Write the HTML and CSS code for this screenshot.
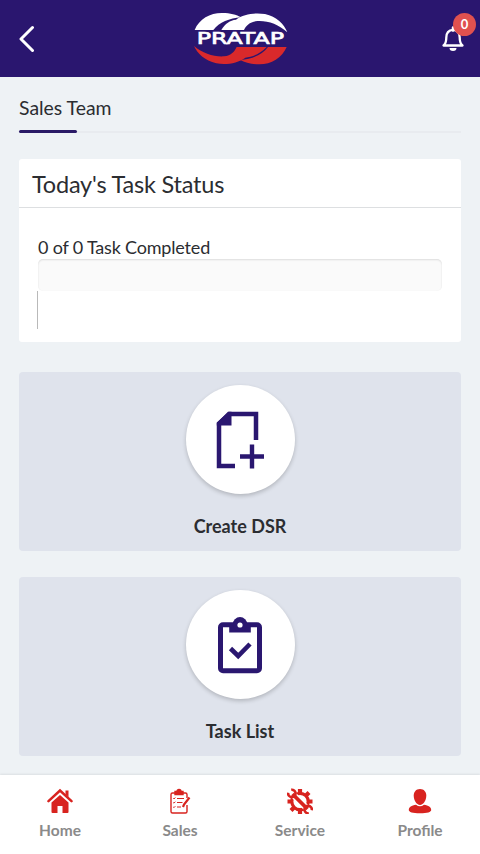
FILE: index.html
```html
<!DOCTYPE html>
<html lang="en">
<head>
  <meta charset="UTF-8">
  <title>Sales Team</title>
  <meta name="viewport" content="width=device-width, initial-scale=1">
  <link rel="stylesheet" href="styles.css">
</head>
<body>
  <div class="app">
    <header class="header">
      <a class="back-btn" href="#" aria-label="Back">
        <svg width="16" height="28" viewBox="0 0 16 28"><path d="M13.500 2.500 2 14l11.500 11.500" fill="none" stroke="#fff" stroke-width="3" stroke-linecap="round" stroke-linejoin="round"/></svg>
      </a>
      <svg class="logo" width="96" height="54" viewBox="36 36 288 162">
        <g fill="#fff">
          <path d="M44 90C58 56 92 38 128 39C150 39 170 44 183 52C148 55 118 67 100 90Z"/>
          <path d="M124 90C136 70 150 61 168 59C190 42 225 37 255 42C290 50 312 72 322 97C296 72 262 61 232 63C210 65 198 76 192 90Z"/>
        </g>
        <g fill="#d9292b" transform="rotate(180 182 116)">
          <path d="M44 91C58 58 92 38 128 39C150 39 170 44 183 52C148 55 118 67 100 91Z"/>
          <path d="M104 91C126 68 150 61 168 59C190 42 225 37 255 42C290 50 312 72 322 94C296 72 262 61 232 63C210 65 200 78 194 91Z"/>
        </g>
        <text x="50" y="133" textLength="262" lengthAdjust="spacingAndGlyphs" class="logo-text">PRATAP</text>
      </svg>
      <a class="bell" href="#" aria-label="Notifications">
        <svg width="24" height="26" viewBox="0 0 24 26"><path d="M2.500 19.500C5 17.500 5.300 15 5.300 11.500C5.300 7 7.500 4.200 12 3.800C16.500 4.200 18.700 7 18.700 11.500C18.700 15 19 17.500 21.500 19.500Z" fill="none" stroke="#fff" stroke-width="2.300" stroke-linejoin="round"/><path d="M12 1.500v3" stroke="#fff" stroke-width="2.500" stroke-linecap="round"/><path d="M8.500 22h7a3.500 3 0 0 1-7 0z" fill="#fff"/></svg>
        <span class="badge">0</span>
      </a>
    </header>

    <main class="content">
      <h1 class="page-title">Sales Team</h1>

      <section class="status-card">
        <h2 class="status-title">Today's Task Status</h2>
        <div class="status-body">
          <div class="status-label">0 of 0 Task Completed</div>
          <div class="progress"></div>
          <div class="progress-mark"></div>
        </div>
      </section>

      <a class="tile" href="#">
        <span class="tile-icon">
          <svg width="50" height="60" viewBox="0 0 50 60">
            <path d="M20 56H4V13.500L14.500 4H41V30" fill="none" stroke="#2a1770" stroke-width="4.500"/>
            <path d="M1.800 13 13 1.800h3.500v13.700H1.800z" fill="#2a1770"/>
            <path d="M25 46.500h24M37 34.500v24" stroke="#2a1770" stroke-width="4.400"/>
          </svg>
        </span>
        <span class="tile-label">Create DSR</span>
      </a>

      <a class="tile" href="#">
        <span class="tile-icon">
          <svg width="46" height="60" viewBox="0 0 46 60">
            <rect x="3.500" y="9.800" width="39" height="46" rx="2.500" fill="none" stroke="#2a1770" stroke-width="5"/>
            <path d="M12.200 8h21.600v9.500H12.200z" fill="#2a1770"/>
            <circle cx="23" cy="9.300" r="7.200" fill="#2a1770"/>
            <circle cx="23" cy="10" r="2.600" fill="#fff"/>
            <path d="M13.500 33.500l7.700 7.500L33 29" fill="none" stroke="#2a1770" stroke-width="4.600"/>
          </svg>
        </span>
        <span class="tile-label">Task List</span>
      </a>
    </main>

    <nav class="tabbar">
      <a class="tab" href="#">
        <svg width="26" height="26" viewBox="0 0 26 26" fill="#d8231f"><path d="M4.500 14.500 13 7l8.500 7.500V24q0 1-1 1h-5v-7h-5v7h-5q-1 0-1-1z"/><path d="M1.500 13.200 13 2.800l11.500 10.400" fill="none" stroke="#fff" stroke-width="4.500"/><path d="M1.500 13.200 13 2.500l11.500 10.700" fill="none" stroke="#d8231f" stroke-width="2.500" stroke-linecap="round"/><path d="M18.500 2.500h3V9l-3-2.700z"/></svg>
        <span>Home</span>
      </a>
      <a class="tab" href="#">
        <svg width="26" height="26" viewBox="0 0 26 26" fill="none" stroke="#d8231f" stroke-width="1.400">
          <path d="M8 5H5.500Q4 5 4 6.500v17Q4 25 5.500 25h13q1.500 0 1.500-1.500V17M20 10V6.500Q20 5 18.500 5H16"/>
          <path d="M8 3.500h2a2 2 0 0 1 4 0h2v3H8z" fill="#d8231f"/>
          <path d="M10 10.500h7M10 14.500h5.500M10 19h4" stroke-width="1.200"/>
          <path d="M6.300 10.300l.7.700 1.300-1.500M6.300 14.500l.7.700 1.300-1.500M6.300 19l.7.700 1.300-1.500" stroke-width="1"/>
          <path d="M22.500 9.500 17 16.500l-1 2.500" stroke-width="2.200"/>
        </svg>
        <span>Sales</span>
      </a>
      <a class="tab" href="#">
        <svg width="26" height="26" viewBox="0 0 26 26">
          <circle cx="13" cy="13.500" r="8.200" fill="none" stroke="#d8231f" stroke-width="3.200"/>
          <path d="M13 1v4.500M13 21.500V26M.5 13.500H5M21 13.500h4.500M19 7.500l3-3M7 19.500l-3 3" stroke="#d8231f" stroke-width="4.200"/>
          <path d="M6 6.500 20 20.500" stroke="#fff" stroke-width="6.500"/>
          <path d="M5.500 6 20.500 21" stroke="#d8231f" stroke-width="3.800"/>
          <path d="M4.200 1.800a3.700 3.700 0 1 1-3 3M21.800 25.200a3.700 3.700 0 1 1 3-3" fill="none" stroke="#d8231f" stroke-width="2.600"/>
        </svg>
        <span>Service</span>
      </a>
      <a class="tab" href="#">
        <svg width="26" height="26" viewBox="0 0 26 26" fill="#d8231f"><path d="M13 1c4 0 6.300 2.800 6.300 6.800C19.300 12 16.500 17 13 17S6.700 12 6.700 7.800C6.700 3.800 9 1 13 1z"/><path d="M9 16.800q4 3 8 0c4.500.7 7.200 2.500 7.200 5.200 0 2-3.700 3.300-11.200 3.300S1.800 24 1.800 22c0-2.700 2.700-4.500 7.200-5.200z"/></svg>
        <span>Profile</span>
      </a>
    </nav>
  </div>
</body>
</html>
```
FILE: styles.css
```css
* {
  box-sizing: border-box;
}
body {
  font-family: Lato, 'Liberation Sans', sans-serif;
  background: #eef2f5;
  margin: 0;
  color: #2b2d31;
}
a {
  color: inherit;
  text-decoration: none;
}
svg {
  display: block;
}
.app {
  display: flex;
  flex-direction: column;
  height: 854px;
  overflow: hidden;
}
.header {
  display: grid;
  flex-shrink: 0;
  grid-template-columns: 1fr auto 1fr;
  align-items: center;
  height: 77px;
  background: #2a166f;
  padding: 0 15px 0 19px;
}
.logo {
  margin-left: -4px;
}
.logo-text {
  font-family: 'DejaVu Sans', sans-serif;
  font-size: 48px;
  fill: #fff;
  stroke: #fff;
  stroke-width: 2px;
}
.bell {
  position: relative;
  justify-self: end;
}
.badge {
  position: absolute;
  top: -13px;
  right: -11px;
  width: 23px;
  height: 23px;
  border-radius: 50%;
  background: #e0514f;
  color: #fff;
  font-size: 13px;
  font-weight: bold;
  line-height: 23px;
  text-align: center;
}
.content {
  flex: 1;
  min-height: 0;
  padding: 0 19px;
}
.page-title {
  height: 56px;
  margin: 0 0 26px;
  padding-top: 17px;
  border-bottom: 2px solid #e8ebef;
  font-size: 19.4px;
  font-weight: normal;
  line-height: 28px;
}
.page-title::after {
  content: '';
  display: block;
  width: 58px;
  height: 3px;
  margin-top: 8px;
  border-radius: 2px;
  background: #2a1a66;
}
.status-card {
  height: 183px;
  margin-bottom: 30px;
  border-radius: 3px;
  background: #fff;
}
.status-title {
  height: 49px;
  margin: 0;
  padding-left: 13px;
  border-bottom: 1px solid #dddfe1;
  font-size: 23.5px;
  font-weight: normal;
  letter-spacing: -0.2px;
  line-height: 50px;
}
.status-body {
  padding: 29px 19px 0;
}
.status-label {
  font-size: 18px;
  letter-spacing: -0.18px;
  line-height: 20px;
  padding-bottom: 2px;
}
.progress {
  height: 32px;
  border-radius: 5px;
  background: #fafafa;
  box-shadow: inset 0 1px 2px rgba(0,0,0,0.12);
}
.progress-mark {
  width: 1px;
  height: 38px;
  margin-left: -1px;
  background: #b9b9b9;
}
.tile {
  display: flex;
  flex-direction: column;
  align-items: center;
  height: 179px;
  margin-bottom: 26px;
  padding-top: 13px;
  border-radius: 4px;
  background: #dfe3ec;
}
.tile-icon {
  display: flex;
  align-items: center;
  justify-content: center;
  width: 109px;
  height: 109px;
  border-radius: 50%;
  background: #fff;
  box-shadow: 0 2px 4px rgba(0,0,0,0.2);
}
.tile-label {
  margin-top: 19px;
  font-size: 18px;
  font-weight: bold;
  line-height: 26px;
}
.tabbar {
  display: flex;
  flex-shrink: 0;
  height: 79px;
  background: #fff;
  box-shadow: 0 -1px 2px rgba(0,0,0,0.08);
}
.tab {
  display: flex;
  flex: 1;
  flex-direction: column;
  align-items: center;
  padding-top: 13px;
  color: #8a8a8a;
  font-size: 15.5px;
  font-weight: bold;
}
.tab span {
  margin-top: 6px;
  line-height: 20px;
}
```
